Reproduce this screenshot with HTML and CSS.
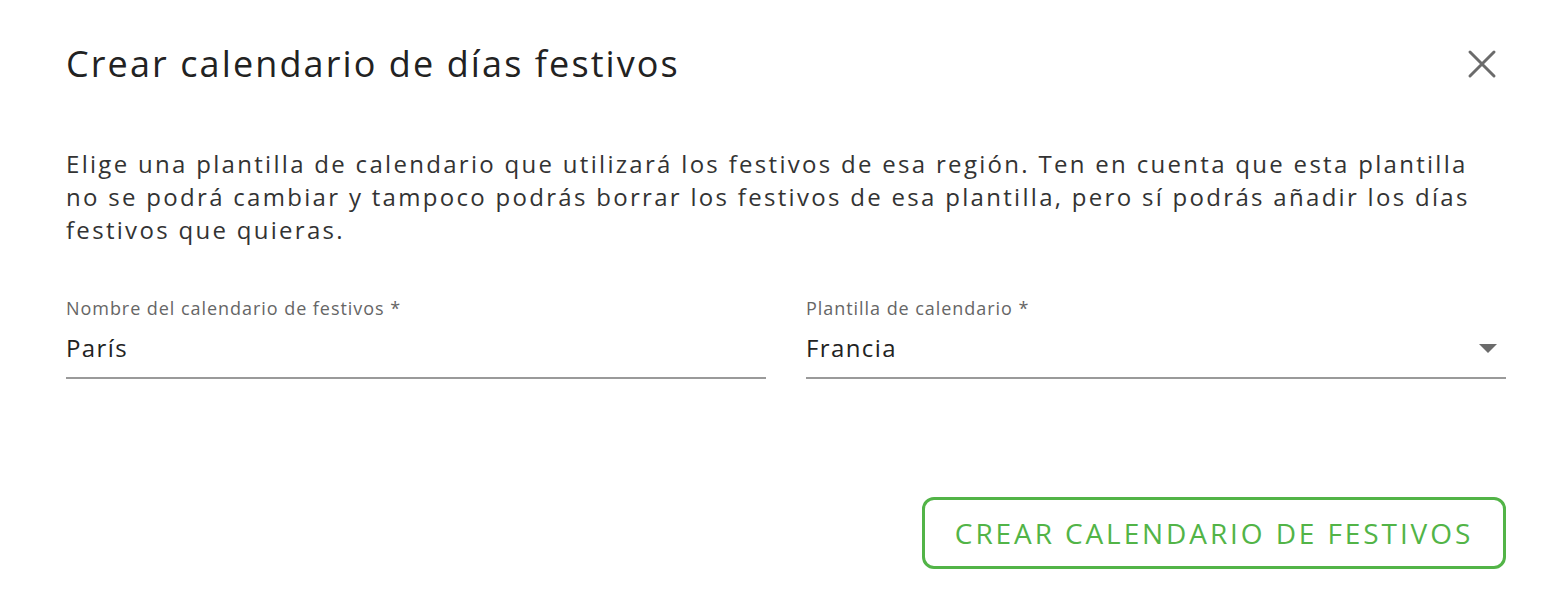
FILE: index.html
```html
<!DOCTYPE html>
<html lang="es">
<head>
<meta charset="utf-8">
<link rel="stylesheet" href="styles.css">
</head>
<body>
<div class="dialog">
  <header class="header">
    <h1 class="title">Crear calendario de días festivos</h1>
    <button class="close" aria-label="Cerrar">
      <svg width="30" height="30" viewBox="0 0 30 30"><path d="M3 3 L27 27 M27 3 L3 27" stroke="#6b6b6b" stroke-width="3" stroke-linecap="round"/></svg>
    </button>
  </header>
  <p class="intro">Elige una plantilla de calendario que utilizará los festivos de esa región. Ten en cuenta que esta plantilla no se podrá cambiar y tampoco podrás borrar los festivos de esa plantilla, pero sí podrás añadir los días festivos que quieras.</p>
  <div class="fields">
    <div class="field">
      <div class="label">Nombre del calendario de festivos *</div>
      <div class="value">París</div>
    </div>
    <div class="field">
      <div class="label">Plantilla de calendario *</div>
      <div class="value select"><span>Francia</span><span class="caret"></span></div>
    </div>
  </div>
  <div class="actions">
    <button class="primary">CREAR CALENDARIO DE FESTIVOS</button>
  </div>
</div>
</body>
</html>
```
FILE: styles.css
```css
html, body {
  margin: 0;
  padding: 0;
  background: #ffffff;
}
body {
  font-family: "Open Sans", "Noto Sans", sans-serif;
  color: #222222;
}
.dialog {
  padding: 38px 62px 0 66px;
}
.header {
  display: flex;
  justify-content: space-between;
  align-items: center;
}
.title {
  margin: 0;
  font-size: 36px;
  font-weight: 400;
  line-height: 52px;
  letter-spacing: 2.1px;
  color: #222222;
}
.close {
  background: none;
  border: 0;
  padding: 0;
  margin-right: 9px;
  width: 30px;
  height: 30px;
  display: flex;
}
.intro {
  margin: 57px 0 0;
  font-size: 24px;
  line-height: 33px;
  letter-spacing: 2.3px;
  color: #333333;
}
.fields {
  display: grid;
  grid-template-columns: 1fr 1fr;
  column-gap: 40px;
  margin-top: 50px;
}
.field {
  border-bottom: 2px solid #9a9a9a;
}
.label {
  font-size: 18px;
  line-height: 24px;
  letter-spacing: 0.95px;
  color: #666666;
}
.value {
  font-size: 24px;
  line-height: 32px;
  letter-spacing: 1.4px;
  margin-top: 12px;
  padding-bottom: 13px;
  color: #222222;
}
.select {
  display: flex;
  justify-content: space-between;
  align-items: center;
}
.caret {
  width: 0;
  height: 0;
  border-left: 9px solid transparent;
  border-right: 9px solid transparent;
  border-top: 9px solid #6b6b6b;
  margin-right: 9px;
}
.actions {
  display: flex;
  justify-content: flex-end;
  margin-top: 118px;
}
.primary {
  font-family: "Open Sans", "Noto Sans", sans-serif;
  font-size: 28px;
  letter-spacing: 2.9px;
  color: #52b447;
  background: #ffffff;
  border: 3px solid #52b447;
  border-radius: 12px;
  width: 584px;
  height: 72px;
  padding: 0;
}
```
